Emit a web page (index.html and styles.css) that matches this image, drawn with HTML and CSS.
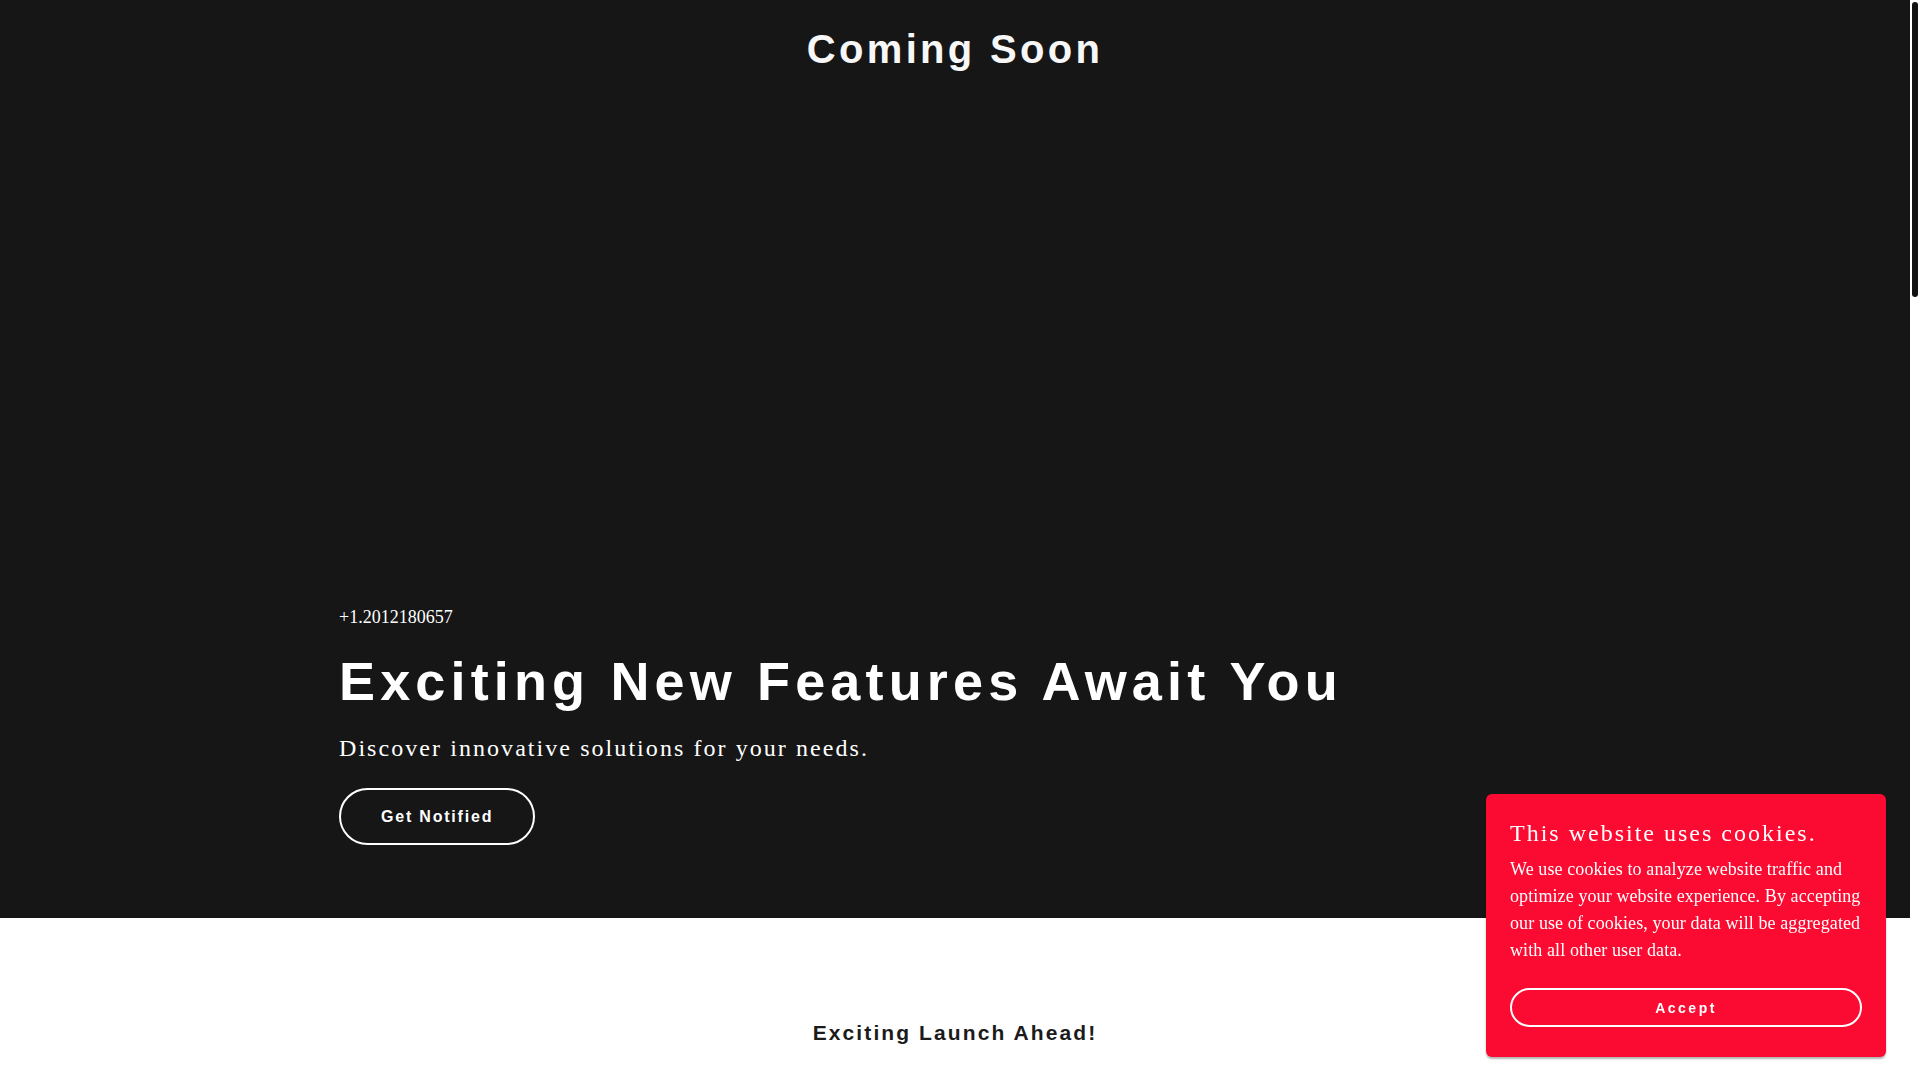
FILE: index.html
```html
<!DOCTYPE html>
<html lang="en">
<head>
<meta charset="utf-8">
<title>Coming Soon</title>
<link rel="stylesheet" href="styles.css">
</head>
<body>
<section class="hero">
  <header class="site-header">
    <h1 class="brand">Coming Soon</h1>
  </header>
  <div class="hero-body">
    <div class="hero-inner">
      <p class="phone">+1.2012180657</p>
      <h2 class="hero-title">Exciting New Features Await You</h2>
      <p class="hero-sub">Discover innovative solutions for your needs.</p>
      <a class="btn-outline" href="#">Get Notified</a>
    </div>
  </div>
</section>
<section class="launch">
  <h3 class="launch-title">Exciting Launch Ahead!</h3>
</section>
<div class="cookie">
  <h4 class="cookie-title">This website uses cookies.</h4>
  <p class="cookie-text">We use cookies to analyze website traffic and optimize your website experience. By accepting our use of cookies, your data will be aggregated with all other user data.</p>
  <a class="cookie-btn" href="#">Accept</a>
</div>
<div class="scrollbar" aria-hidden="true"><div class="scroll-thumb"></div></div>
</body>
</html>
```
FILE: styles.css
```css
html {
  background: #ffffff;
  overflow: hidden;
}
body {
  margin: 0 10px 0 0;
  font-family: "Liberation Sans", Arial, sans-serif;
  background: #ffffff;
  height: 1080px;
}
.scrollbar {
  position: fixed;
  top: 0;
  right: 0;
  width: 10px;
  height: 100vh;
  background: #ffffff;
}
.scroll-thumb {
  margin: 2px 2px 0;
  height: 295px;
  background: #121212;
  border-radius: 3px;
}
.hero {
  background: #161616;
  color: #ffffff;
  height: 918px;
  display: flex;
  flex-direction: column;
}
.site-header {
  padding-top: 24px;
  text-align: center;
}
.brand {
  margin: 0;
  font-size: 40px;
  line-height: 50px;
  font-weight: 700;
  letter-spacing: 3.3px;
  color: #f7f7f7;
}
.hero-body {
  flex: 1;
  display: flex;
  flex-direction: column;
  justify-content: flex-end;
  padding-bottom: 73px;
}
.hero-inner {
  width: 1232px;
  margin: 0 auto;
}
.phone {
  margin: 0;
  font-family: "Liberation Serif", "Times New Roman", serif;
  font-size: 18px;
  line-height: 27px;
  color: #ffffff;
}
.hero-title {
  margin: 18px 0 0;
  font-size: 54px;
  line-height: 65px;
  font-weight: 700;
  letter-spacing: 5.15px;
}
.hero-sub {
  margin: 16px 0 0;
  font-family: "Liberation Serif", "Times New Roman", serif;
  font-size: 24px;
  line-height: 36px;
  letter-spacing: 2.06px;
}
.btn-outline {
  display: inline-flex;
  align-items: center;
  justify-content: center;
  margin-top: 22px;
  height: 57px;
  box-sizing: border-box;
  padding: 0 40px;
  border: 2px solid #ffffff;
  border-radius: 29px;
  color: #ffffff;
  text-decoration: none;
  font-size: 16px;
  font-weight: 700;
  letter-spacing: 1.8px;
}
.launch {
  padding-top: 102px;
  text-align: center;
}
.launch-title {
  margin: 0;
  font-size: 21px;
  line-height: 26px;
  font-weight: 700;
  letter-spacing: 2.1px;
  color: #1b1b1b;
}
.cookie {
  position: fixed;
  right: 34px;
  bottom: 23px;
  width: 400px;
  box-sizing: border-box;
  padding: 24px 24px 30px;
  background: #fb0a31;
  border-radius: 6px;
  box-shadow: 0 2px 2px rgba(0, 0, 0, 0.3);
  color: #ffffff;
}
.cookie-title {
  margin: 0;
  font-family: "Liberation Serif", "Times New Roman", serif;
  font-weight: 400;
  font-size: 24px;
  line-height: 30px;
  letter-spacing: 2px;
}
.cookie-text {
  margin: 8px 0 0;
  font-family: "Liberation Serif", "Times New Roman", serif;
  font-size: 18px;
  line-height: 27px;
  letter-spacing: 0.1px;
}
.cookie-btn {
  display: flex;
  align-items: center;
  justify-content: center;
  margin-top: 24px;
  height: 39px;
  box-sizing: border-box;
  border: 2px solid #ffffff;
  border-radius: 20px;
  color: #ffffff;
  text-decoration: none;
  font-size: 14px;
  font-weight: 700;
  letter-spacing: 2.5px;
}
```
